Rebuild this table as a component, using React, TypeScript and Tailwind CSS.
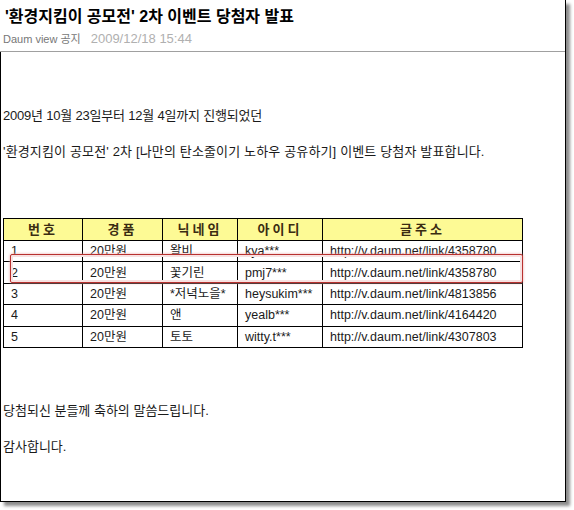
const rows = [
  { no: "1", prize: "20만원", nick: "왈비", id: "kya***", url: "http://v.daum.net/link/4358780" },
  { no: "2", prize: "20만원", nick: "꽃기린", id: "pmj7***", url: "http://v.daum.net/link/4358780" },
  { no: "3", prize: "20만원", nick: "*저녁노을*", id: "heysukim***", url: "http://v.daum.net/link/4813856" },
  { no: "4", prize: "20만원", nick: "앤", id: "yealb***", url: "http://v.daum.net/link/4164420" },
  { no: "5", prize: "20만원", nick: "토토", id: "witty.t***", url: "http://v.daum.net/link/4307803" },
]

const headers = ["번호", "경품", "닉네임", "아이디", "글주소"]
const widths = ["w-[79px]", "w-[80px]", "w-[75px]", "w-[85px]", "w-[200px]"]

export default function App() {
  return (
    <div className="relative w-[574px] h-[510px] bg-white overflow-hidden font-['Liberation_Sans','Noto_Sans_CJK_KR',sans-serif] text-[#222]">
      <div className="flex flex-col w-[566px] h-[502px] border-r border-b border-black bg-white shadow-[4px_4px_3px_rgba(0,0,0,0.45)]">
        {/* header */}
        <div className="pl-[5px] pt-[7px] text-[16px] leading-[20px] font-bold text-black whitespace-nowrap">
          '환경지킴이 공모전' 2차 이벤트 당첨자 발표
        </div>
        <div className="flex items-baseline mt-[4px] pl-[3px] leading-[16px] whitespace-nowrap">
          <span className="text-[11px] text-[#777]">Daum view 공지</span>
          <span className="ml-[10px] text-[13px] text-[#b0b0b0]">2009/12/18 15:44</span>
        </div>
        <div className="mt-[4px] border-t border-[#a0a0a0]" />

        {/* body */}
        <div className="flex-1 border-l border-black pt-[55px] text-[13px] leading-[18px] text-[#1a1a1a]">
          <p className="pl-[2px] tracking-[-0.2px]">2009년 10월 23일부터 12월 4일까지 진행되었던</p>
          <p className="pl-[2px] mt-[18px] tracking-[0.15px]">'환경지킴이 공모전' 2차 [나만의 탄소줄이기 노하우 공유하기] 이벤트 당첨자 발표합니다.</p>

          <table className="ml-[2px] mt-[57px] border-collapse text-[12.5px]">
            <thead>
              <tr className="h-[22px] bg-[#fdfa95]">
                {headers.map((h, i) => (
                  <th key={h} className={`${widths[i]} border border-black p-0 text-center text-[13px] font-bold tracking-[3px] text-[#3a2c12]`}>
                    {h}
                  </th>
                ))}
              </tr>
            </thead>
            <tbody>
              {rows.map((r) => (
                <tr key={r.no} className="h-[21.4px]">
                  {[r.no, r.prize, r.nick, r.id, r.url].map((c, i) => (
                    <td key={i} className="border border-black py-0 pl-[7px] leading-[16px] whitespace-nowrap">
                      {c}
                    </td>
                  ))}
                </tr>
              ))}
            </tbody>
          </table>

          <p className="pl-[2px] mt-[54px]">당첨되신 분들께 축하의 말씀드립니다.</p>
          <p className="pl-[2px] mt-[18px]">감사합니다.</p>
        </div>
      </div>

      {/* red highlight annotation */}
      <div className="absolute left-[10px] top-[254px] w-[513px] h-[29px] rounded-[2px] border border-[#b8312f] shadow-[inset_0_0_0_2px_#f7e1e1,0_0_3px_#eaa6a6]" />
    </div>
  )
}
